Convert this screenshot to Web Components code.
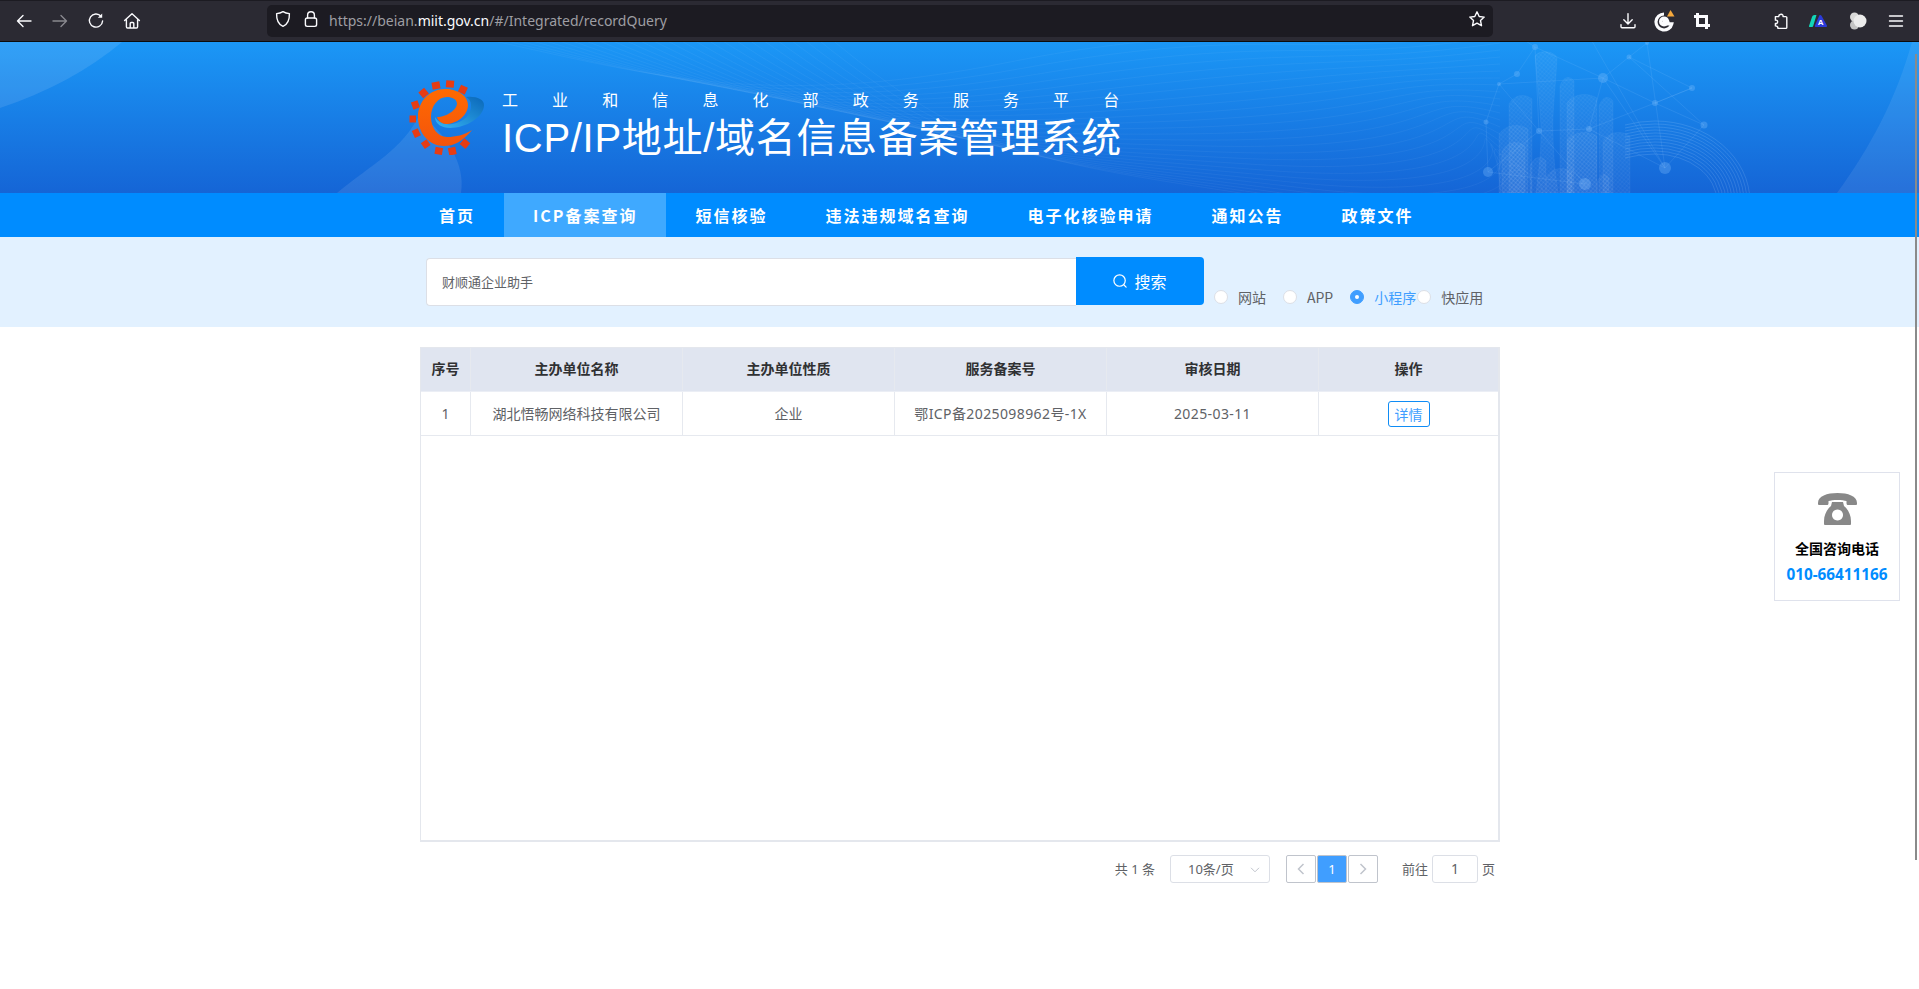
<!DOCTYPE html>
<html lang="zh-CN">
<head>
<meta charset="utf-8">
<title>ICP/IP地址/域名信息备案管理系统</title>
<style>
    html, body { margin: 0; height: 989px; overflow: hidden; background: #fff; }
    body { font-family: "Noto Sans CJK SC", "Noto Sans", sans-serif; color: #606266; position: relative; }
</style>
</head>
<body>
<browser-bar url-host="miit.gov.cn"></browser-bar>
<site-header></site-header>
<site-nav>
    <nav-item>首页</nav-item>
    <nav-item active>ICP备案查询</nav-item>
    <nav-item>短信核验</nav-item>
    <nav-item>违法违规域名查询</nav-item>
    <nav-item>电子化核验申请</nav-item>
    <nav-item>通知公告</nav-item>
    <nav-item>政策文件</nav-item>
</site-nav>
<search-band value="财顺通企业助手">
    <kind-radio>网站</kind-radio>
    <kind-radio>APP</kind-radio>
    <kind-radio checked tight>小程序</kind-radio>
    <kind-radio>快应用</kind-radio>
</search-band>
<record-table>
    <table-row head>
        <span>序号</span><span>主办单位名称</span><span>主办单位性质</span><span>服务备案号</span><span>审核日期</span><span>操作</span>
    </table-row>
    <table-row>
        <span>1</span><span>湖北悟畅网络科技有限公司</span><span>企业</span><span class="num">鄂ICP备2025098962号-1X</span><span class="num">2025-03-11</span><span><detail-button>详情</detail-button></span>
    </table-row>
</record-table>
<page-bar></page-bar>
<phone-card></phone-card>
<scroll-thumb></scroll-thumb>

<script>
const icon = (body, size = 18) => `<svg width="${size}" height="${size}" viewBox="0 0 18 18" fill="none" stroke="#fbfbfe" stroke-width="1.4" stroke-linecap="round" stroke-linejoin="round">${body}</svg>`;

class BrowserBar extends HTMLElement {
    constructor() {
        super();
        this.attachShadow({mode: 'open'});
    }
    connectedCallback() {
        this.shadowRoot.innerHTML = `
            <style>
                :host { display: flex; align-items: center; height: 40px; background: #2b2a33; border-top: 1px solid #1c1b22; border-bottom: 1px solid #0c0c0d; box-sizing: content-box; }
                .btn { width: 36px; height: 32px; display: flex; align-items: center; justify-content: center; flex: none; }
                .left { display: flex; margin-left: 6px; margin-right: 117px; }
                .url { width: 1226px; height: 32px; background: #1c1b22; border-radius: 5px; display: flex; align-items: center; flex: none; font: 14px "Noto Sans", sans-serif; color: #9e9ea3; white-space: nowrap; }
                .url b { font-weight: 400; color: #fbfbfe; }
                .url .shield { margin-left: 7px; }
                .url .lock { margin-left: 10px; }
                .url .text { margin-left: 9px; flex: 1; position: relative; top: -1px; }
                .url .star { margin-right: 7px; }
                .right { display: flex; margin-left: 117px; }
                .gap { width: 42px; flex: none; }
            </style>
            <div class="left">
                <div class="btn">${icon('<path d="M16 9H2.5M8 3.5 2.5 9 8 14.5"/>')}</div>
                <div class="btn" style="opacity:.45">${icon('<path d="M2 9h13.5M10 3.5 15.5 9 10 14.5"/>')}</div>
                <div class="btn">${icon('<path d="M14 4.2A6.6 6.6 0 1 0 15.6 9"/><path d="M15.2 1.4v4.4h-4.4z" fill="#fbfbfe" stroke="none"/>')}</div>
                <div class="btn">${icon('<path d="M1.6 8.6 9 1.8l7.4 6.8M3.4 7.4v7.4c0 .8.4 1.2 1.2 1.2h8.8c.8 0 1.2-.4 1.2-1.2V7.4M7.2 16v-4.6c0-.6.3-.9.9-.9h1.8c.6 0 .9.3.9.9V16"/>')}</div>
            </div>
            <div class="url">
                <span class="shield">${icon('<path d="M9 1.6c2 1.3 4.200 1.900 6.400 2 .2 6.400-1.400 10.800-6.400 12.800C4 14.400 2.400 10 2.600 3.600 4.800 3.500 7 2.900 9 1.600z"/>')}</span>
                <span class="lock">${icon('<rect x="3.400" y="8" width="11.200" height="8.400" rx="1.800"/><path d="M5.600 8V5.200a3.400 3.400 0 0 1 6.800 0V8"/>')}</span>
                <span class="text">https://beian.<b>miit.gov.cn</b>/#/Integrated/recordQuery</span>
                <span class="star">${icon('<path d="m9 1.800 2.200 4.700 5 .6-3.700 3.500 1 5.100L9 13.200l-4.500 2.500 1-5.100L1.800 7.100l5-.6z"/>')}</span>
            </div>
            <div class="right">
                <div class="btn">${icon('<path d="M9 1.600v10M4.800 7.800 9 12l4.200-4.200M2 12.600v2.200c0 .6.400 1 1 1h12c.6 0 1-.4 1-1v-2.200"/>')}</div>
                <div class="btn"><svg width="22" height="22" viewBox="0 0 22 22"><path d="M11 4a8 8 0 1 0 7.800 9.800H11V11h3.600A4 4 0 0 0 11 8.200c-2 0-3.400 1.300-3.400 3.200s1.400 3.400 3.400 3.400c1.400 0 2.400-.5 3-1" fill="none" stroke="#fbfbfe" stroke-width="3.200"/><path d="M17.500 0l4 6.500h-7.500z" fill="#f5a83c"/></svg></div>
                <div class="btn" style="margin-left:2px"><svg width="18" height="18" viewBox="0 0 18 18" fill="none" stroke="#fbfbfe" stroke-width="3"><path d="M1 4.500h12.500V17M4.500 1v12.500H17"/></svg></div>
                <div class="gap"></div>
                <div class="btn">${icon('<path d="M7 16.400H14.800c.6 0 1-.4 1-1V5.600c0-.6-.4-1-1-1h-2.800c.6-2.800-3.800-3.600-4.400 0H4.400v3.600c3-.9 3 4 0 3.300v2.400c.6 0 2.600 0 2.600 2.500z"/>')}</div>
                <div class="btn" style="margin-left:2px"><svg width="20" height="14" viewBox="0 0 20 14"><path d="M1 12 4 3c.4-1.200 1.300-2 2.500-2h2L5.200 12c-.4 1-1 1-1.700 1H2c-.8 0-1.200-.4-1-1z" fill="#12d6b8"/><path d="M12 1c.8 0 1.400.4 1.800 1.200l5 9c.5 1 0 1.800-1 1.800H8c-1 0-1.500-.8-1-1.800l4-9C11.400 1.400 11.600 1 12 1z" fill="#2b3bd9"/><text x="12.600" y="11.400" font-family="Liberation Sans" font-size="8" font-weight="700" fill="#fff" text-anchor="middle">A</text></svg></div>
                <div class="btn" style="margin-left:4px"><svg width="20" height="18" viewBox="0 0 20 18"><circle cx="6.500" cy="5" r="4.500" fill="#d9d9d9"/><circle cx="6.500" cy="13" r="4.500" fill="#c4c4c4"/><circle cx="12" cy="9" r="6.500" fill="#ececec"/></svg></div>
                <div class="btn" style="margin-left:2px">${icon('<path d="M2.500 4h13M2.500 9h13M2.500 14h13"/>')}</div>
            </div>
        `;
    }
}
customElements.define('browser-bar', BrowserBar);

class SiteHeader extends HTMLElement {
    constructor() {
        super();
        this.attachShadow({mode: 'open'});
    }
    backdrop() {
        const nodes = [[1535,5,3],[1517,32,3],[1499,42,2],[1486,80,2.500],[1488,130,5],[1603,36,5],[1629,15,2.500],[1647,1,2],[1692,46,3],[1655,61,3],[1704,83,3.500],[1665,126,6],[1589,87,3],[1539,89,3],[1585,142,6],[1515,-8,2],[1589,-6,2]];
        const edges = [[0,1],[1,2],[2,3],[3,4],[2,13],[0,5],[5,6],[6,7],[5,9],[9,8],[6,8],[8,9],[9,10],[6,10],[5,2],[9,12],[12,13],[12,11],[5,11],[7,11],[4,13],[13,14],[4,14],[12,5],[11,10],[0,13],[15,0],[16,11]];
        const towers = [
            [1560,39,14],[1599,59,14],[1509,57,23],[1567,56,30],[1499,87,29],[1502,104,23],[1567,94,30],[1603,94,27],[1530,119,16],[1546,130,26],[1597,136,12]
        ];
        let lines = edges.map(([a, b]) => `<line x1="${nodes[a][0]}" y1="${nodes[a][1]}" x2="${nodes[b][0]}" y2="${nodes[b][1]}"/>`).join('');
        let dots = nodes.map(([x, y, r]) => `<circle cx="${x}" cy="${y}" r="${r}"/>`).join('');
        let blocks = towers.map(([x, y, w]) => `<path d="M${x} 151V${y + 5}C${x + w * .2} ${y - 3} ${x + w * .6} ${y - 7} ${x + w} ${y}V151Z"/>`).join('');
        let arcs = '';
        for (let i = 0; i < 12; i++) {
            const rx = 95 - i * 3, ry = 81 - i * 3;
            arcs += `<path d="M1625 ${160 - ry + 4}Q1640 ${160 - ry} 1655 ${160 - ry}A${rx} ${ry} 0 0 1 ${1655 + rx} 160"/>`;
        }
        let waves = '';
        for (let i = 0; i < 26; i++) {
            waves += `<path d="M${480 + i * 14} -4C${640 + i * 14} ${30 + i * 4} ${760 + i * 12} ${70 + i * 2} ${1010 + i * 14} ${20 + i * 6}S${1300 + i * 8} ${20 + i * 2} ${1500} ${-20 + i * 7}"/>`;
        }
        return `
            <svg class="bg" width="1919" height="151" viewBox="0 0 1919 151">
                <defs>
                    <pattern id="mesh" width="3" height="3" patternUnits="userSpaceOnUse" patternTransform="rotate(40)">
                        <rect width="3" height="3" fill="#fff" opacity=".04"/><path d="M0 0H3M0 0V3" stroke="#fff" stroke-opacity=".09" stroke-width=".7"/>
                    </pattern>
                </defs>
                <path d="M0 0H122Q72 42 0 66Z" fill="#fff" opacity=".1"/>
                <path d="M337 151C372 122 402 108 420 72C446 92 466 122 461 151Z" fill="#fff" opacity=".09"/>
                <path d="M1919 0H1912C1895 60 1870 105 1837 151H1919Z" fill="#fff" opacity=".08"/>
                <g fill="none" stroke="#fff" stroke-opacity=".045" stroke-width="1">${waves}</g>
                <g stroke="#9fd0ff" stroke-opacity=".18" stroke-width=".7">${lines}</g>
                <g fill="#8cc6ff" opacity=".28">${dots}</g>
                <g fill="url(#mesh)" stroke="#fff" stroke-opacity=".07" stroke-width=".6">${blocks}
                    <path d="M1535 14C1538 8 1554 8 1557 16C1556 40 1552 70 1553 90C1553 115 1556 135 1558 151H1536C1538 135 1541 115 1541 90C1541 70 1537 40 1535 14Z"/>
                </g>
                <g fill="none" stroke="#bfe0ff" stroke-opacity=".2" stroke-width=".8">${arcs}</g>
            </svg>
        `;
    }
    connectedCallback() {
        this.shadowRoot.innerHTML = `
            <style>
                :host { display: block; position: relative; height: 151px; overflow: hidden; background: linear-gradient(180deg, #1b97f6 0%, #1565d6 100%); color: #fff; }
                .bg { position: absolute; left: 0; top: 0; }
                .inner { position: relative; width: 1100px; margin: 0 0 0 410px; padding-top: 28px; display: flex; align-items: flex-start; box-sizing: border-box; }
                .logo { flex: none; margin-left: -10px; display: block; }
                .words { margin-left: 17px; margin-top: 19px; }
                .sub { font-size: 16px; line-height: 20px; letter-spacing: 34.100px; white-space: nowrap; }
                .title { font-family: "Liberation Sans", "Noto Sans CJK SC", sans-serif; font-size: 40px; line-height: 46px; margin-top: 6px; white-space: nowrap; letter-spacing: .7px; }
            </style>
            ${this.backdrop()}
            <div class="inner">
                <svg class="logo" width="85" height="85" viewBox="0 0 85 85">
                    <defs>
                        <linearGradient id="sw" x1="0" y1="1" x2="1" y2="0"><stop offset="0" stop-color="#35b4f5"/><stop offset="1" stop-color="#0a67b8"/></linearGradient>
                        <linearGradient id="or" x1="0" y1="0" x2="0" y2="1"><stop offset="0" stop-color="#ff6a00"/><stop offset="1" stop-color="#f4540c"/></linearGradient>
                    </defs>
                    <g fill="#e63c14">
                        <rect x="32" y="12" width="8" height="7" transform="rotate(-10 36 15.500)"/>
                        <rect x="46" y="10.500" width="8" height="7" transform="rotate(5 50 14)"/>
                        <rect x="59" y="16" width="7.500" height="7.500" transform="rotate(25 63 20)"/>
                        <rect x="20" y="19" width="7.500" height="7.500" transform="rotate(-40 24 23)"/>
                        <rect x="12" y="31" width="7" height="7.500" transform="rotate(-20 16 35)"/>
                        <rect x="9.500" y="45.500" width="6.500" height="7"/>
                        <rect x="13" y="59.500" width="6.500" height="7.500" transform="rotate(-25 16 63)"/>
                        <rect x="22" y="71" width="7" height="7" transform="rotate(-35 25 74)"/>
                        <rect x="35" y="77.500" width="7.500" height="7" transform="rotate(10 39 81)"/>
                        <rect x="48.500" y="77.500" width="7.500" height="7.500" transform="rotate(-12 52 81)"/>
                        <rect x="61" y="70" width="7.500" height="7.500" transform="rotate(40 65 74)"/>
                    </g>
                    <path d="M66 27C76 26 84 29 84 35C84 47 66 58 50 58C42 58 35 54 35 47C38 52 44 55 52 54C64 52 72 44 71 35C71 31 69 29 66 27Z" fill="url(#sw)"/>
                    <path d="M72 60C62 72 54 76 44 76C29 76 18 63 18 47C18 31 30 19 45 19C58 19 68 26 68 35C68 46 56 54 46 54C42 54 38 51 37 47C42 48 56 42 57 34C57 29 52 27 47 27C38 27 31 36 31 47C31 58 38 67 47 67C56 67 64 65 72 60Z" fill="url(#or)"/>
                </svg>
                <div class="words">
                    <div class="sub">工业和信息化部政务服务平台</div>
                    <div class="title">ICP/IP地址/域名信息备案管理系统</div>
                </div>
            </div>
        `;
    }
}
customElements.define('site-header', SiteHeader);

class SiteNav extends HTMLElement {
    constructor() {
        super();
        this.attachShadow({mode: 'open'});
        this.shadowRoot.innerHTML = `
            <style>
                :host { display: block; height: 44px; background: #008cff; }
                .inner { width: 1100px; margin: 0 0 0 410px; display: flex; height: 100%; }
            </style>
            <div class="inner"><slot></slot></div>
        `;
    }
}
customElements.define('site-nav', SiteNav);

class NavItem extends HTMLElement {
    constructor() {
        super();
        this.attachShadow({mode: 'open'});
        this.shadowRoot.innerHTML = `
            <style>
                :host { display: block; padding: 0 29px; line-height: 44px; font-size: 16px; font-weight: 700; letter-spacing: 2px; color: #fff; white-space: nowrap; }
                :host([active]) { background: #3fa9ff; }
            </style>
            <slot></slot>
        `;
    }
}
customElements.define('nav-item', NavItem);

class SearchBand extends HTMLElement {
    constructor() {
        super();
        this.attachShadow({mode: 'open'});
    }
    connectedCallback() {
        this.shadowRoot.innerHTML = `
            <style>
                :host { display: block; height: 90px; background: #e2f1ff; }
                .inner { width: 1100px; margin: 0 0 0 410px; padding: 20px 0 0 16px; display: flex; align-items: flex-start; box-sizing: border-box; }
                .input { width: 650px; height: 48px; margin-top: 1px; box-sizing: border-box; background: #fff; border: 1px solid #dcdfe6; border-right: 0; border-radius: 4px 0 0 4px; padding-left: 15px; font-size: 13px; line-height: 46px; color: #606266; }
                .go { width: 128px; height: 48px; background: #008cff; border-radius: 0 4px 4px 0; color: #fff; font-size: 16px; line-height: 46px; display: flex; align-items: center; justify-content: center; gap: 7px; }
                .kinds { display: flex; margin: 30px 0 0 10px; }
            </style>
            <div class="inner">
                <div class="input">${this.getAttribute('value')}</div>
                <div class="go">
                    <svg width="14" height="14" viewBox="0 0 16 16" fill="none" stroke="#fff" stroke-width="1.400" stroke-linecap="round"><circle cx="7.500" cy="7.500" r="6.500"/><path d="m12.300 12.300 2.700 2.700"/></svg>
                    <span>搜索</span>
                </div>
                <div class="kinds"><slot></slot></div>
            </div>
        `;
    }
}
customElements.define('search-band', SearchBand);

class KindRadio extends HTMLElement {
    constructor() {
        super();
        this.attachShadow({mode: 'open'});
        this.shadowRoot.innerHTML = `
            <style>
                :host { display: flex; align-items: center; height: 20px; margin-right: 17px; font-size: 14px; color: #606266; white-space: nowrap; }
                :host([tight]) { margin-right: 1px; }
                :host([checked]) { color: #409eff; }
                i { width: 14px; height: 14px; box-sizing: border-box; border: 1px solid #dcdfe6; border-radius: 50%; background: #fff; margin-right: 10px; position: relative; }
                :host([checked]) i { background: #409eff; border-color: #409eff; }
                :host([checked]) i::after { content: ""; position: absolute; left: 4px; top: 4px; width: 4px; height: 4px; border-radius: 50%; background: #fff; }
            </style>
            <i></i><slot></slot>
        `;
    }
}
customElements.define('kind-radio', KindRadio);

class RecordTable extends HTMLElement {
    constructor() {
        super();
        this.attachShadow({mode: 'open'});
        this.shadowRoot.innerHTML = `
            <style>
                :host { display: block; width: 1080px; height: 495px; margin: 20px 0 0 420px; box-sizing: border-box; border: 1px solid #e4e7ed; border-bottom-width: 2px; border-right-width: 2px; --cols: 50px 212px 212px 212px 212px 179px; }
            </style>
            <slot></slot>
        `;
    }
}
customElements.define('record-table', RecordTable);

class TableRow extends HTMLElement {
    constructor() {
        super();
        this.attachShadow({mode: 'open'});
        this.shadowRoot.innerHTML = `
            <style>
                :host { display: grid; grid-template-columns: var(--cols); height: 44px; box-sizing: border-box; border-bottom: 1px solid #e6e9ef; font-family: "Noto Sans", "Noto Sans CJK SC", sans-serif; font-size: 14px; line-height: 20px; color: #606266; text-align: center; align-items: stretch; }
                :host([head]) { background: #e0e5f0; color: #303133; font-weight: 700; border-bottom: 1px solid #ebeef5; padding-bottom: 1px; }
                ::slotted(span) { display: flex; align-items: center; justify-content: center; border-right: 1px solid #e6e9ef; white-space: nowrap; }
                ::slotted(span:last-child) { border-right: 0; }
                ::slotted(.num) { letter-spacing: .4px; }
            </style>
            <slot></slot>
        `;
    }
}
customElements.define('table-row', TableRow);

class DetailButton extends HTMLElement {
    constructor() {
        super();
        this.attachShadow({mode: 'open'});
        this.shadowRoot.innerHTML = `
            <style>
                :host { display: block; width: 42px; height: 26px; box-sizing: border-box; border: 1px solid #0f8cf5; border-radius: 3px; color: #409eff; font-size: 14px; line-height: 26px; text-align: center; }
            </style>
            <slot></slot>
        `;
    }
}
customElements.define('detail-button', DetailButton);

class PageBar extends HTMLElement {
    constructor() {
        super();
        this.attachShadow({mode: 'open'});
    }
    connectedCallback() {
        this.shadowRoot.innerHTML = `
            <style>
                :host { display: flex; justify-content: flex-end; align-items: center; width: 1100px; height: 28px; margin: 13px 0 0 410px; padding-right: 15px; box-sizing: border-box; font-family: "Noto Sans", "Noto Sans CJK SC", sans-serif; font-size: 13px; line-height: 26px; color: #606266; }
                .sel { width: 100px; height: 28px; box-sizing: border-box; border: 1px solid #dcdfe6; border-radius: 3px; margin: 0 16px 0 15px; position: relative; padding-left: 17px; }
                .sel svg { position: absolute; right: 9px; top: 11px; }
                .pg { width: 30px; height: 28px; box-sizing: border-box; border: 1px solid #c0c4cc; border-radius: 2px; margin-right: 1px; display: flex; align-items: center; justify-content: center; }
                .pg.on { background: #409eff; color: #fff; }
                .pg.end { margin-right: 24px; }
                .jump { width: 46px; height: 28px; box-sizing: border-box; border: 1px solid #dcdfe6; border-radius: 3px; margin: 0 4px; text-align: center; font-size: 14px; }
            </style>
            <span>共 1 条</span>
            <div class="sel">10条/页<svg width="10" height="6" viewBox="0 0 10 6" fill="none" stroke="#c0c4cc"><path d="m1 .8 4 4 4-4"/></svg></div>
            <div class="pg"><svg width="8" height="12" viewBox="0 0 8 12" fill="none" stroke="#c0c4cc" stroke-width="1.500"><path d="M6.500 1 1.500 6l5 5"/></svg></div>
            <div class="pg on">1</div>
            <div class="pg end"><svg width="8" height="12" viewBox="0 0 8 12" fill="none" stroke="#c0c4cc" stroke-width="1.500"><path d="m1.500 1 5 5-5 5"/></svg></div>
            <span>前往</span>
            <div class="jump">1</div>
            <span>页</span>
        `;
    }
}
customElements.define('page-bar', PageBar);

class PhoneCard extends HTMLElement {
    constructor() {
        super();
        this.attachShadow({mode: 'open'});
    }
    connectedCallback() {
        this.shadowRoot.innerHTML = `
            <style>
                :host { position: absolute; right: 19px; top: 472px; width: 126px; height: 129px; box-sizing: border-box; border: 1px solid #dfe2ec; background: #fff; display: flex; flex-direction: column; align-items: center; padding-top: 20px; }
                svg { display: block; }
                .label { margin-top: 13px; font-size: 14px; line-height: 20px; font-weight: 700; color: #000; }
                .tel { margin-top: 6px; font-size: 15.300px; line-height: 20px; font-weight: 700; color: #008cff; font-family: "Noto Sans", sans-serif; }
            </style>
            <svg width="39" height="32" viewBox="0 0 39 32" fill="#888">
                <path d="M0 10C0 3 9 0 19.500 0S39 3 39 10V11C39 12 38 12 37 12H30C29 12 28.500 11.500 28.500 10V8C25 6.500 14 6.500 10.500 8V10C10.500 11.500 10 12 9 12H2C1 12 0 12 0 11Z"/>
                <path fill-rule="evenodd" d="M14 9H25L26 13C30 16 33 22 33 28V31C33 32 32 32 31 32H8C7 32 6 32 6 31V28C6 22 9 16 13 13ZM19.500 16.500a5.500 5.500 0 1 0 .01 0Z"/>
            </svg>
            <div class="label">全国咨询电话</div>
            <div class="tel">010-66411166</div>
        `;
    }
}
customElements.define('phone-card', PhoneCard);

class ScrollThumb extends HTMLElement {
    constructor() {
        super();
        this.attachShadow({mode: 'open'});
        this.shadowRoot.innerHTML = `
            <style>
                :host { position: absolute; right: 2px; top: 54px; width: 2px; height: 806px; background: #8a8a8a; }
            </style>
        `;
    }
}
customElements.define('scroll-thumb', ScrollThumb);
</script>
</body>
</html>
